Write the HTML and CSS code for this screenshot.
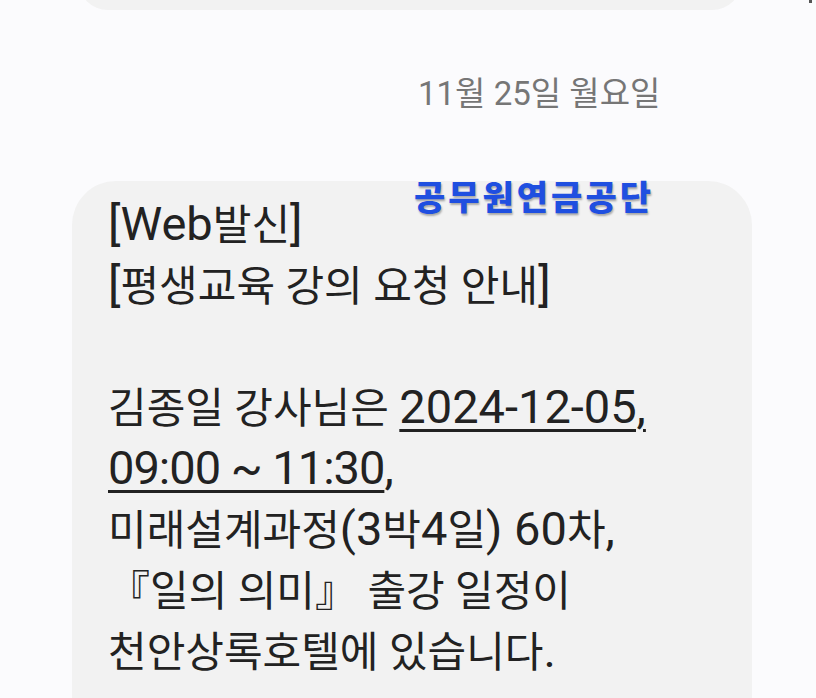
FILE: index.html
```html
<!DOCTYPE html>
<html lang="ko">
<head>
<meta charset="utf-8">
<link rel="stylesheet" href="styles.css">
</head>
<body>
<div class="screen">
  <div class="prev-bubble"></div>
  <span class="corner-dot"></span>
  <div class="date-row">11월 25일 월요일</div>
  <div class="bubble">
    <div class="sender">공무원연금공단</div>
    <p class="msg"><span class="lat">[Web</span>발신<span class="lat">]</span><br><span class="lat">[</span>평생교육 강의 요청 안내<span class="lat">]</span><br><br>김종일 강사님은 <span class="link lat">2024-12-05,<br><span class="time">09:00 ~ 11:30</span></span><span class="lat">,</span><br>미래설계과정<span class="lat">(3</span>박<span class="lat">4</span>일<span class="lat">) 60</span>차<span class="lat">,</span><br>『일의 의미』 출강 일정이<br>천안상록호텔에 있습니다<span class="lat">.</span></p>
  </div>
</div>
</body>
</html>
```
FILE: styles.css
```css
html, body {
  margin: 0;
  padding: 0;
  background: #fbfbfd;
}
.screen {
  width: 816px;
  height: 698px;
  overflow: hidden;
  position: relative;
  font-family: "Roboto", "Noto Sans CJK KR", "Noto Sans", sans-serif;
}
.prev-bubble {
  height: 40px;
  margin: -30px 74px 0 78px;
  background: #f2f2f2;
  border-radius: 0 0 30px 30px;
}
.corner-dot {
  position: absolute;
  top: 0;
  right: 4px;
  width: 3px;
  height: 3px;
  background: #555;
}
.date-row {
  padding-left: 418px;
  margin-top: 60px;
  font-size: 33px;
  line-height: 48px;
  color: #767676;
}
.bubble {
  position: relative;
  margin: 63px 64px 0 72px;
  background: #f2f2f2;
  border-radius: 44px 44px 0 0;
  padding: 14px 36px 40px;
  height: 700px;
}
.sender {
  position: absolute;
  top: -2px;
  left: 342px;
  font-family: "Noto Sans CJK KR", sans-serif;
  font-size: 34px;
  line-height: 34px;
  font-weight: 900;
  letter-spacing: 3px;
  color: #1f4fe0;
  white-space: nowrap;
  text-shadow: 1px 2px 2px rgba(0, 0, 0, 0.3);
}
.msg {
  margin: 0;
  font-size: 42px;
  line-height: 61px;
  color: #222;
}
.lat {
  font-size: 47px;
  line-height: 0;
}
.time {
  letter-spacing: -1px;
}
.link {
  text-decoration: underline;
  text-decoration-thickness: 3px;
  text-underline-offset: 6px;
}
```
